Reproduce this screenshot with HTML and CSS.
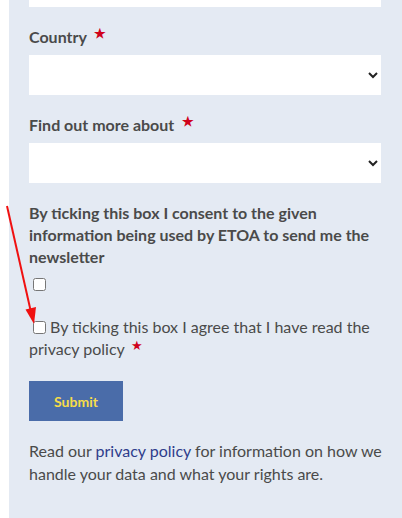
FILE: index.html
```html
<!DOCTYPE html>
<html lang="en">
<head>
  <meta charset="UTF-8" />
  <meta name="viewport" content="width=device-width, initial-scale=1.0"/>
  <title>Newsletter sign-up</title>
  <link rel="stylesheet" href="styles.css">
</head>
<body>
  <div class="panel">
    <form class="signup">
      <input type="text" class="text-input" name="organisation">

      <div class="field">
        <label class="field-label" for="country">Country <span class="req">&#9733;</span></label>
        <select id="country" name="country">
          <option value=""></option>
        </select>
      </div>

      <div class="field">
        <label class="field-label" for="topic">Find out more about <span class="req">&#9733;</span></label>
        <select id="topic" name="topic">
          <option value=""></option>
        </select>
      </div>

      <div class="consent">
        <label class="consent-label" for="newsletter">By ticking this box I consent to the given information being used by ETOA to send me the newsletter</label>
        <input type="checkbox" id="newsletter" class="consent-box">
      </div>

      <div class="privacy">
        <input type="checkbox" id="privacy"><label for="privacy">By ticking this box I agree that I have read the privacy policy</label> <span class="req">&#9733;</span>
      </div>

      <button type="submit" class="submit-btn">Submit</button>

      <p class="note">Read our <a href="#">privacy policy</a> for information on how we handle your data and what your rights are.</p>
    </form>
  </div>

  <svg class="pointer" width="402" height="518" viewBox="0 0 402 518">
    <line x1="7" y1="206" x2="30.5" y2="310" stroke="#f01010" stroke-width="2" />
    <polygon points="34,324 25.5,309.5 36,307" fill="#f01010" />
  </svg>
</body>
</html>
```

FILE: styles.css
```css
body {
  margin: 0;
  background: #ffffff;
  font-family: Lato, "Open Sans", Arial, sans-serif;
  color: #4a4a4a;
  position: relative;
  height: 518px;
  overflow: hidden;
}

.panel {
  margin: -33px 0 0 9px;
  background: #e4eaf3;
  padding: 0 21px 60px 20px;
  min-height: 600px;
}

.text-input {
  display: block;
  width: 100%;
  height: 40px;
  box-sizing: border-box;
  border: none;
  background: #ffffff;
  margin: 0;
}

.field {
  margin-top: 18px;
}

.field-label {
  display: block;
  font-size: 16px;
  font-weight: bold;
  line-height: 24px;
  margin-bottom: 6px;
}

.req {
  color: #d0021b;
  font-size: 13px;
  line-height: 0;
  position: relative;
  top: -5px;
  margin-left: 4px;
}

select {
  display: block;
  width: 100%;
  height: 40px;
  border: none;
  border-radius: 0;
  background: #ffffff;
  font-family: inherit;
  font-size: 15px;
  padding: 0 8px;
  color: #222;
}

.consent {
  margin-top: 19px;
}

.consent-label {
  display: block;
  font-size: 16px;
  font-weight: bold;
  line-height: 22px;
}

.consent-box {
  display: block;
  margin: 10px 0 0 4px;
}

.privacy {
  margin-top: 25px;
  font-size: 16px;
  line-height: 22px;
}

.privacy input {
  margin: 0 4px 0 4px;
  vertical-align: -1px;
}

.privacy .req {
  margin-left: 2px;
}

.submit-btn {
  display: block;
  margin-top: 21px;
  width: 94px;
  height: 40px;
  border: none;
  background: #4a6ca9;
  color: #f7dc4a;
  font-family: inherit;
  font-size: 14px;
  font-weight: bold;
}

.note {
  margin: 18px -6px 0 0;
  font-size: 16px;
  line-height: 23px;
}

.note a {
  color: #2e3d8c;
  text-decoration: none;
}

.pointer {
  position: absolute;
  top: 0;
  left: 0;
}
```
